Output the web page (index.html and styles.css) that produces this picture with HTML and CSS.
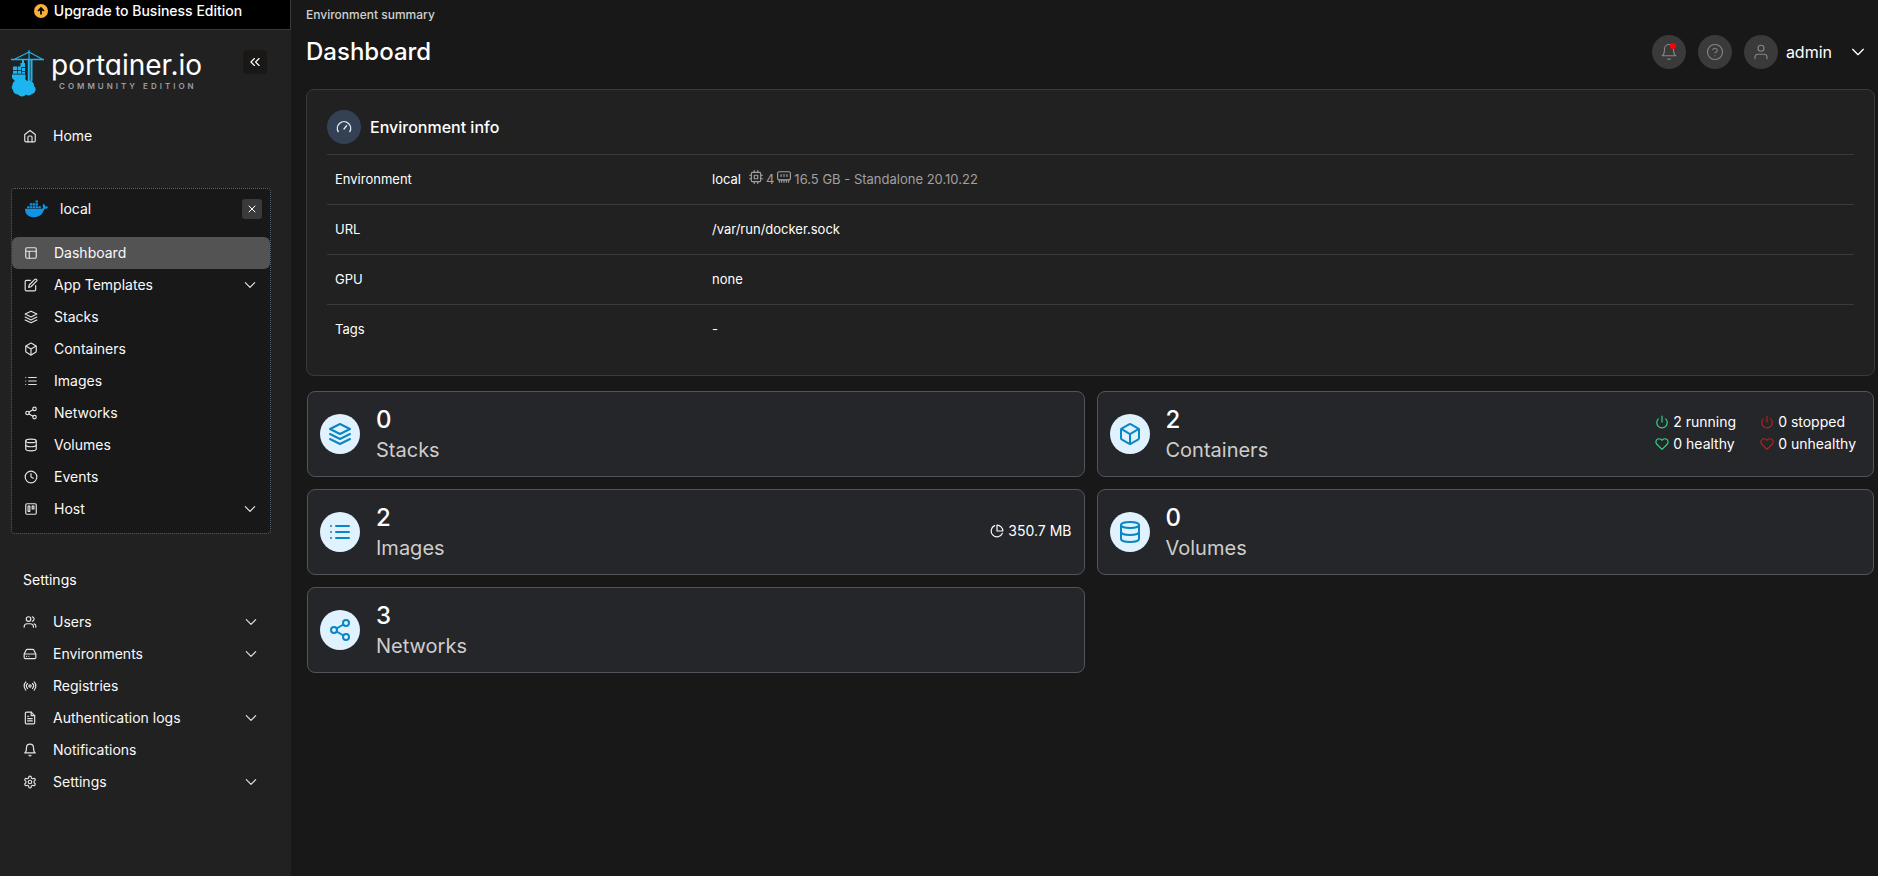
FILE: index.html
```html
<!DOCTYPE html>
<html lang="en">
<head>
<meta charset="utf-8">
<title>Portainer</title>
<link rel="stylesheet" href="styles.css">
</head>
<body>
<svg class="sprite" aria-hidden="true">
  <symbol id="home" viewBox="0 0 24 24"><path d="M3 9.5 12 2.5l9 7V20a2 2 0 0 1-2 2H5a2 2 0 0 1-2-2z"/><path d="M8.500 22v-8a2 2 0 0 1 2-2h3a2 2 0 0 1 2 2v8"/></symbol>
  <symbol id="layout" viewBox="0 0 24 24"><rect x="3" y="3" width="18" height="18" rx="2"/><path d="M3 9h18M9 21V9"/></symbol>
  <symbol id="edit" viewBox="0 0 24 24"><path d="M11 4H4a2 2 0 0 0-2 2v14a2 2 0 0 0 2 2h14a2 2 0 0 0 2-2v-7"/><path d="M18.500 2.500a2.121 2.121 0 0 1 3 3L12 15l-4 1 1-4z"/></symbol>
  <symbol id="layers" viewBox="0 0 24 24"><path d="m12 2 10 5-10 5L2 7z"/><path d="m2 12 10 5 10-5M2 17l10 5 10-5"/></symbol>
  <symbol id="box" viewBox="0 0 24 24"><path d="M21 16V8a2 2 0 0 0-1-1.730l-7-4a2 2 0 0 0-2 0l-7 4A2 2 0 0 0 3 8v8a2 2 0 0 0 1 1.730l7 4a2 2 0 0 0 2 0l7-4A2 2 0 0 0 21 16z"/><path d="m3.270 6.960 8.730 5.050 8.730-5.050M12 22.080V12"/></symbol>
  <symbol id="list" viewBox="0 0 24 24"><path d="M8 6h13M8 12h13M8 18h13M3 6h.01M3 12h.01M3 18h.01"/></symbol>
  <symbol id="share" viewBox="0 0 24 24"><circle cx="18" cy="5" r="3"/><circle cx="6" cy="12" r="3"/><circle cx="18" cy="19" r="3"/><path d="m8.590 13.510 6.830 3.980M15.410 6.510l-6.820 3.980"/></symbol>
  <symbol id="database" viewBox="0 0 24 24"><ellipse cx="12" cy="5" rx="9" ry="3"/><path d="M21 12c0 1.660-4 3-9 3s-9-1.340-9-3"/><path d="M3 5v14c0 1.660 4 3 9 3s9-1.340 9-3V5"/></symbol>
  <symbol id="clock" viewBox="0 0 24 24"><circle cx="12" cy="12" r="10"/><path d="M12 6v6l4 2"/></symbol>
  <symbol id="trello" viewBox="0 0 24 24"><rect x="3" y="3" width="18" height="18" rx="2"/><path d="M7 7h3v9H7zM14 7h3v5h-3z"/></symbol>
  <symbol id="users" viewBox="0 0 24 24"><path d="M18 21a6 6 0 0 0-6-6H7a5 5 0 0 0-5 5v1"/><circle cx="9.500" cy="7" r="4"/><path d="M22 21v-2a4 4 0 0 0-3-3.870M16 3.130a4 4 0 0 1 0 7.750"/></symbol>
  <symbol id="drive" viewBox="0 0 24 24"><path d="M22 12H2M5.450 5.110 2 12v6a2 2 0 0 0 2 2h16a2 2 0 0 0 2-2v-6l-3.450-6.890A2 2 0 0 0 16.760 4H7.240a2 2 0 0 0-1.790 1.110zM6 16h.01M10 16h.01"/></symbol>
  <symbol id="radio" viewBox="0 0 24 24"><circle cx="12" cy="12" r="2"/><path d="M4.930 19.070a10 10 0 0 1 0-14.140M7.760 16.240a6 6 0 0 1 0-8.480M16.240 7.760a6 6 0 0 1 0 8.480M19.070 4.930a10 10 0 0 1 0 14.140"/></symbol>
  <symbol id="file" viewBox="0 0 24 24"><path d="M14 2H6a2 2 0 0 0-2 2v16a2 2 0 0 0 2 2h12a2 2 0 0 0 2-2V8z"/><path d="M14 2v6h6M16 13H8M16 17H8M10 9H8"/></symbol>
  <symbol id="bell" viewBox="0 0 24 24"><path d="M18 8A6 6 0 0 0 6 8c0 7-3 9-3 9h18s-3-2-3-9M13.730 21a2 2 0 0 1-3.460 0"/></symbol>
  <symbol id="gear" viewBox="0 0 24 24"><path d="M12.220 2h-.44a2 2 0 0 0-2 2v.18a2 2 0 0 1-1 1.730l-.43.25a2 2 0 0 1-2 0l-.15-.08a2 2 0 0 0-2.730.73l-.22.38a2 2 0 0 0 .73 2.730l.15.1a2 2 0 0 1 1 1.720v.51a2 2 0 0 1-1 1.740l-.15.09a2 2 0 0 0-.73 2.730l.22.38a2 2 0 0 0 2.730.73l.15-.08a2 2 0 0 1 2 0l.43.25a2 2 0 0 1 1 1.730V20a2 2 0 0 0 2 2h.44a2 2 0 0 0 2-2v-.18a2 2 0 0 1 1-1.730l.43-.25a2 2 0 0 1 2 0l.15.08a2 2 0 0 0 2.730-.73l.22-.39a2 2 0 0 0-.73-2.730l-.15-.08a2 2 0 0 1-1-1.740v-.5a2 2 0 0 1 1-1.740l.15-.09a2 2 0 0 0 .73-2.730l-.22-.38a2 2 0 0 0-2.730-.73l-.15.08a2 2 0 0 1-2 0l-.43-.25a2 2 0 0 1-1-1.730V4a2 2 0 0 0-2-2z"/><circle cx="12" cy="12" r="3"/></symbol>
  <symbol id="chevron" viewBox="0 0 24 24"><path d="m4 8 8 8 8-8"/></symbol>
  <symbol id="collapse" viewBox="0 0 24 24"><path d="m11 18-6-6 6-6M19 18l-6-6 6-6"/></symbol>
  <symbol id="close" viewBox="0 0 24 24"><path d="M18 6 6 18M6 6l12 12"/></symbol>
  <symbol id="help" viewBox="0 0 24 24"><circle cx="12" cy="12" r="10"/><path d="M9.090 9a3 3 0 0 1 5.830 1c0 2-3 3-3 3M12 17h.01"/></symbol>
  <symbol id="user" viewBox="0 0 24 24"><path d="M20 21v-2a4 4 0 0 0-4-4H8a4 4 0 0 0-4 4v2"/><circle cx="12" cy="7" r="4"/></symbol>
  <symbol id="gauge" viewBox="0 0 24 24"><path d="m12 15 4-5M3.340 19a10 10 0 1 1 17.320 0"/></symbol>
  <symbol id="cpu" viewBox="0 0 24 24"><rect x="4" y="4" width="16" height="16" rx="2"/><path d="M9 9h6v6H9zM9 1v3M15 1v3M9 20v3M15 20v3M20 9h3M20 15h3M1 9h3M1 15h3"/></symbol>
  <symbol id="memory" viewBox="0 0 24 24"><rect x="1" y="3" width="22" height="14" rx="3"/><path d="M7 8v3M12 8v3M17 8v3M4 17v4M8 17v4M12 17v4M16 17v4M20 17v4"/></symbol>
  <symbol id="power" viewBox="0 0 24 24"><path d="M18.360 6.640a9 9 0 1 1-12.730 0M12 2v10"/></symbol>
  <symbol id="heart" viewBox="0 0 24 24"><path d="M20.840 4.610a5.500 5.500 0 0 0-7.780 0L12 5.670l-1.060-1.060a5.500 5.500 0 0 0-7.780 7.780L12 21.230l8.840-8.840a5.500 5.500 0 0 0 0-7.780z"/></symbol>
  <symbol id="pie" viewBox="0 0 24 24"><path d="M21.210 15.890A10 10 0 1 1 8 2.830"/><path d="M22 12A10 10 0 0 0 12 2v10z"/></symbol>
</svg>

<div class="app">
  <aside class="sidebar">
    <button class="upgrade" type="button">
      <svg class="upgrade-icon" viewBox="0 0 24 24"><circle cx="12" cy="12" r="12" fill="#f9b13c"/><path d="M12 18V7M7 12l5-5 5 5" fill="none" stroke="#000" stroke-width="3"/></svg>
      Upgrade to Business Edition
    </button>

    <div class="brand-row">
      <a class="brand" href="#">
        <svg class="brand-mark" viewBox="0 0 34 47">
          <g fill="none" stroke="#1cb5f0"><path d="M0 9.500h33" stroke-width="1.600"/><path d="M18 0v9M18 2 4 9M18 2l13 7" stroke-width="1.200"/><path d="M17.800 9v22M20.500 9v22" stroke-width="2"/><path d="M12 10v4" stroke-width="2"/></g>
          <g fill="#1cb5f0"><path d="M9.500 13h4.500v4H9.500zM2 16.500h4v3.500H2zM6.700 16.500h3.600v3.500H6.700zM11 18h3v3h-3zM2 20.700h4v3H2zM6.700 20.700h3.600v3H6.700zM11 21.700h3v2h-3zM1 24.500h13.500v4L12 31H4l-3-3z"/>
          <path d="M1.500 35a4.500 4.500 0 0 1 4.500-4.500 6 6 0 0 1 10 .5 5 5 0 0 1 7 5 4.600 4.600 0 0 1-2 8 5 5 0 0 1-6 .5 5 5 0 0 1-8 0A4.500 4.500 0 0 1 2 40a4 4 0 0 1-.5-5z"/></g>
        </svg>
        <span class="brand-text">
          <span class="brand-name">portainer.io</span>
          <span class="brand-edition">COMMUNITY EDITION</span>
        </span>
      </a>
      <button class="collapse" type="button" aria-label="Collapse sidebar"><svg class="icon"><use href="#collapse"/></svg></button>
    </div>

    <nav class="nav">
      <ul class="menu">
        <li><a class="item" href="#"><svg class="icon"><use href="#home"/></svg>Home</a></li>
      </ul>

      <section class="env">
        <div class="env-head">
          <svg class="whale" viewBox="0 0 24 18" fill="#0f93e4"><path d="M11 0h2.500v2.300H11zM5 3h2.500v2.300H5zM8 3h2.500v2.300H8zM11 3h2.500v2.300H11zM2.200 6h2.400v2.200H2.200zM5 6h2.500v2.200H5zM8 6h2.500v2.200H8zM11 6h2.500v2.200H11zM14 6h2.500v2.200H14z"/><path d="M0 8.700h16.800c1 0 1.900-.4 2.200-.8-.9-1.600-.6-3.300.3-4.400 1.300.8 1.700 1.900 1.700 2.800 1-.2 2.200-.1 3 .6-.6 1.500-1.900 2-3.700 2-2 5.700-5.500 8.600-11.300 8.600C3 17.500 0 14 0 8.700z"/></svg>
          <span class="env-name">local</span>
          <button class="env-close" type="button" aria-label="Disconnect"><svg class="icon"><use href="#close"/></svg></button>
        </div>
        <ul class="menu">
          <li><a class="item active" href="#"><svg class="icon"><use href="#layout"/></svg>Dashboard</a></li>
          <li><a class="item" href="#"><svg class="icon"><use href="#edit"/></svg>App Templates<svg class="icon caret"><use href="#chevron"/></svg></a></li>
          <li><a class="item" href="#"><svg class="icon"><use href="#layers"/></svg>Stacks</a></li>
          <li><a class="item" href="#"><svg class="icon"><use href="#box"/></svg>Containers</a></li>
          <li><a class="item" href="#"><svg class="icon"><use href="#list"/></svg>Images</a></li>
          <li><a class="item" href="#"><svg class="icon"><use href="#share"/></svg>Networks</a></li>
          <li><a class="item" href="#"><svg class="icon"><use href="#database"/></svg>Volumes</a></li>
          <li><a class="item" href="#"><svg class="icon"><use href="#clock"/></svg>Events</a></li>
          <li><a class="item" href="#"><svg class="icon"><use href="#trello"/></svg>Host<svg class="icon caret"><use href="#chevron"/></svg></a></li>
        </ul>
      </section>

      <h2 class="menu-title">Settings</h2>
      <ul class="menu">
        <li><a class="item" href="#"><svg class="icon"><use href="#users"/></svg>Users<svg class="icon caret"><use href="#chevron"/></svg></a></li>
        <li><a class="item" href="#"><svg class="icon"><use href="#drive"/></svg>Environments<svg class="icon caret"><use href="#chevron"/></svg></a></li>
        <li><a class="item" href="#"><svg class="icon"><use href="#radio"/></svg>Registries</a></li>
        <li><a class="item" href="#"><svg class="icon"><use href="#file"/></svg>Authentication logs<svg class="icon caret"><use href="#chevron"/></svg></a></li>
        <li><a class="item" href="#"><svg class="icon"><use href="#bell"/></svg>Notifications</a></li>
        <li><a class="item" href="#"><svg class="icon"><use href="#gear"/></svg>Settings<svg class="icon caret"><use href="#chevron"/></svg></a></li>
      </ul>
    </nav>
  </aside>

  <main class="main">
    <div class="crumb">Environment summary</div>
    <header class="header">
      <h1 class="title">Dashboard</h1>
      <div class="tools">
        <button class="round" type="button" aria-label="Notifications"><svg class="icon"><use href="#bell"/></svg><span class="dot"></span></button>
        <button class="round" type="button" aria-label="Help"><svg class="icon"><use href="#help"/></svg></button>
        <button class="account" type="button"><span class="round"><svg class="icon"><use href="#user"/></svg></span>admin<svg class="icon account-caret"><use href="#chevron"/></svg></button>
      </div>
    </header>

    <section class="panel">
      <div class="panel-head">
        <span class="panel-icon"><svg class="icon"><use href="#gauge"/></svg></span>
        <h2 class="panel-title">Environment info</h2>
      </div>
      <table class="info">
        <tr><th scope="row">Environment</th><td><div class="env-line">local <span class="muted"><svg class="icon"><use href="#cpu"/></svg>4 <svg class="icon"><use href="#memory"/></svg>16.5 GB - Standalone 20.10.22</span></div></td></tr>
        <tr><th scope="row">URL</th><td>/var/run/docker.sock</td></tr>
        <tr><th scope="row">GPU</th><td>none</td></tr>
        <tr><th scope="row">Tags</th><td>-</td></tr>
      </table>
    </section>

    <div class="cards">
      <a class="card" href="#">
        <span class="card-icon"><svg class="icon"><use href="#layers"/></svg></span>
        <span class="card-text"><span class="count">0</span><span class="kind">Stacks</span></span>
      </a>
      <a class="card" href="#">
        <span class="card-icon"><svg class="icon"><use href="#box"/></svg></span>
        <span class="card-text"><span class="count">2</span><span class="kind">Containers</span></span>
        <span class="states">
          <span class="stat good"><svg class="icon"><use href="#power"/></svg>2 running</span>
          <span class="stat bad"><svg class="icon"><use href="#power"/></svg>0 stopped</span>
          <span class="stat good"><svg class="icon"><use href="#heart"/></svg>0 healthy</span>
          <span class="stat bad"><svg class="icon"><use href="#heart"/></svg>0 unhealthy</span>
        </span>
      </a>
      <a class="card" href="#">
        <span class="card-icon"><svg class="icon"><use href="#list"/></svg></span>
        <span class="card-text"><span class="count">2</span><span class="kind">Images</span></span>
        <span class="stat"><svg class="icon"><use href="#pie"/></svg>350.7 MB</span>
      </a>
      <a class="card" href="#">
        <span class="card-icon"><svg class="icon"><use href="#database"/></svg></span>
        <span class="card-text"><span class="count">0</span><span class="kind">Volumes</span></span>
      </a>
      <a class="card" href="#">
        <span class="card-icon"><svg class="icon"><use href="#share"/></svg></span>
        <span class="card-text"><span class="count">3</span><span class="kind">Networks</span></span>
      </a>
    </div>
  </main>
</div>
</body>
</html>
```
FILE: styles.css
```css
* { box-sizing: border-box; }

body {
  margin: 0;
  background: #181818;
  color: #fff;
  font-family: Inter, "Liberation Sans", sans-serif;
  font-size: 14px;
  line-height: 20px;
}

h1, h2, ul { margin: 0; padding: 0; font-weight: 400; }
ul { list-style: none; }
a { color: inherit; text-decoration: none; }
button { font: inherit; color: inherit; border: 0; padding: 0; background: none; cursor: pointer; }

.sprite { display: none; }

.icon {
  flex: none;
  width: 14px;
  height: 14px;
  fill: none;
  stroke: currentColor;
  stroke-width: 2;
  stroke-linecap: round;
  stroke-linejoin: round;
}

.app { display: flex; min-height: 100vh; }

/* Sidebar */
.sidebar { flex: none; width: 291px; background: #212121; }

.upgrade {
  display: flex;
  align-items: center;
  justify-content: center;
  gap: 6px;
  width: 100%;
  height: 30px;
  padding: 0 14px 8px 0;
  background: #000;
  border: solid #3a3a3a;
  border-width: 0 1px 1px 0;
  font-weight: 500;
}
.upgrade-icon { width: 14px; height: 14px; }

.brand-row {
  display: flex;
  align-items: flex-start;
  justify-content: space-between;
  padding: 20px 24px 20px 11px;
}
.brand { display: flex; gap: 6px; }
.brand-mark { width: 34px; height: 47px; }
.brand-text { display: flex; flex-direction: column; }
.brand-name { font-size: 28px; line-height: 31px; font-feature-settings: "cv11", "ss03"; }
.brand-edition { padding-left: 8px; color: #9a9ca5; font-size: 8px; line-height: 10px; font-weight: 600; letter-spacing: 3px; }

.collapse {
  display: grid;
  place-items: center;
  width: 24px;
  height: 24px;
  background: #1a1817;
  border-radius: 4px;
}

.nav { padding: 3px 20px 20px 11px; }

.item {
  display: flex;
  align-items: center;
  gap: 16px;
  height: 32px;
  padding: 0 13px 0 12px;
  border-radius: 6px;
  color: #fafafa;
}
.item .icon { color: #e4e4e4; }
.item .caret { margin-left: auto; }
.item.active { background: #535353; }

.env {
  margin-top: 36px;
  padding-bottom: 8px;
  background: #181818;
  border: 1px dotted #5a6570;
  border-radius: 4px;
}
.env-head { display: flex; align-items: center; gap: 12px; padding: 10px 8px 18px 13px; }
.whale { width: 23px; height: 18px; }
.env-close {
  display: grid;
  place-items: center;
  width: 20px;
  height: 20px;
  margin-left: auto;
  background: #3a3a3a;
  border-radius: 3px;
}
.env-close .icon { width: 12px; height: 12px; }

.menu-title { padding: 36px 0 16px 12px; font-size: 14px; line-height: 20px; }

/* Main column */
.main { flex: 1; min-width: 0; padding: 5px 3px 20px 15px; }

.crumb { color: #d0d0d0; font-size: 12px; font-weight: 500; }

.header { display: flex; align-items: center; justify-content: space-between; height: 54px; padding-right: 9px; }
.title { font-size: 24px; line-height: 32px; font-weight: 500; }

.tools { display: flex; gap: 12px; }
.round {
  position: relative;
  display: grid;
  place-items: center;
  width: 34px;
  height: 34px;
  background: #3a3a3a;
  border-radius: 50%;
  color: #8a8580;
}
.round .icon { width: 18px; height: 18px; stroke-width: 1.500; }
.dot {
  position: absolute;
  top: 8px;
  right: 10px;
  width: 6px;
  height: 6px;
  background: #f00;
  border-radius: 50%;
}
.account { display: flex; align-items: center; gap: 8px; font-size: 16px; }
.account-caret { width: 16px; height: 16px; margin-left: 10px; }

.panel {
  margin-top: 10px;
  padding: 20px;
  background: #212121;
  border: 1px solid #3a3a3a;
  border-radius: 8px;
}
.panel-head { display: flex; align-items: center; gap: 9px; padding-bottom: 10px; }
.panel-icon {
  display: grid;
  place-items: center;
  width: 34px;
  height: 34px;
  background: #344054;
  border-radius: 50%;
  color: #e0f2fe;
}
.panel-icon .icon { width: 16px; height: 16px; }
.panel-title { font-size: 16px; font-weight: 500; }

.info { width: 100%; border-collapse: collapse; font-size: 13px; }
.info th, .info td {
  height: 50px;
  padding: 0 8px 2px;
  border-top: 1px solid #3a3a3a;
  font-weight: 400;
  text-align: left;
}
.info th { width: 377px; }
.env-line { display: flex; align-items: center; gap: 8px; }
.muted { display: flex; align-items: center; gap: 3px; color: #a0a0a0; }
.muted .icon { margin-bottom: 3px; }

.cards {
  display: grid;
  grid-template-columns: 1fr 1fr;
  gap: 12px;
  padding: 15px 1px 0;
}
.card {
  display: flex;
  align-items: center;
  gap: 16px;
  padding: 12px;
  background: #25262a;
  border: 1px solid #50555b;
  border-radius: 8px;
}
.card-icon {
  display: grid;
  place-items: center;
  width: 40px;
  height: 40px;
  background: #e0f2fe;
  border-radius: 50%;
  color: #0a86c4;
}
.card-icon .icon { width: 24px; height: 24px; }
.card-text { display: flex; flex-direction: column; flex: 1; }
.count { font-size: 24px; line-height: 32px; font-weight: 500; }
.kind { color: #cfcdca; font-size: 20px; line-height: 28px; }

.states { display: grid; grid-template-columns: auto auto; gap: 0 24px; padding-right: 5px; }
.stat { display: flex; align-items: center; gap: 4px; padding-bottom: 2px; }
.good .icon { color: #32d583; }
.bad .icon { color: #b42318; }
```
